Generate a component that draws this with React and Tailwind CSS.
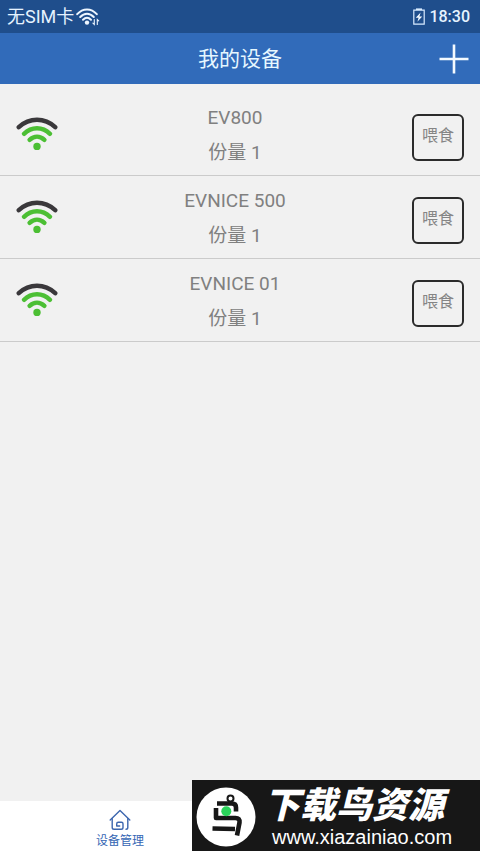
import React from "react";

const devices = [
  { name: "EV800", portion: 1 },
  { name: "EVNICE 500", portion: 1 },
  { name: "EVNICE 01", portion: 1 },
];

function StatusWifi() {
  return (
    <svg width="24" height="18" viewBox="0 0 24 18" fill="none" stroke="#eef6ff" strokeWidth="2" strokeLinecap="round" aria-hidden="true">
      <path d="M1.2 6.2C6.8-.2 15.2-.2 20.8 6.2" />
      <path d="M4.2 9C8.4 4.6 13.6 4.6 17.8 9" />
      <path d="M7 11.7c2.6-2.5 5.4-2.5 8 0" />
      <circle cx="11" cy="14.6" r="2.2" fill="#eef6ff" stroke="none" />
      <path d="M18.3 11.5v5l-1.4-1.4M21.3 16.5v-5l1.4 1.4" strokeWidth="1.1" />
    </svg>
  );
}

function Battery() {
  return (
    <svg width="12" height="18" viewBox="0 0 12 18" fill="none" aria-hidden="true">
      <path d="M.8 2.2h10.4v14H.8z" stroke="#d9ecff" strokeWidth="1.2" />
      <path d="M3 .4h6v1.6H3z" fill="#d9ecff" />
      <path d="M7.6 4.6 2.8 9.8h2.8l-1.2 4 4.8-5.4H6.4z" fill="#f4faff" />
    </svg>
  );
}

function DeviceWifi() {
  return (
    <svg className="block" width="42" height="34" viewBox="0 0 42 34" fill="none" strokeWidth="4.5" strokeLinecap="round" aria-hidden="true">
      <path d="M2.8 10.2C13.5.4 28.5.4 39.2 10.2" stroke="#3a383b" />
      <path d="M8 16.8c7.6-7.4 18.4-7.4 26 0" stroke="#4cbf34" />
      <path d="M13.6 22.8c4.6-4.2 10.2-4.2 14.8 0" stroke="#4cbf34" />
      <circle cx="21" cy="29.4" r="3.7" fill="#4cbf34" />
    </svg>
  );
}

function HomeIcon() {
  return (
    <svg width="22" height="22" viewBox="0 0 22 22" fill="none" stroke="#3c66ae" strokeWidth="1.4" strokeLinecap="round" strokeLinejoin="round" aria-hidden="true">
      <path d="M1.2 11 11 1.6l9.8 9.4" />
      <path d="M3.2 9.6v8.9q0 1.8 1.8 1.8h7.2q1.8 0 1.8-1.8v-3.7q0-1.5-1.5-1.5H9.3q-1.6 0-1.6 1.6v2.1h3" />
      <path d="M18.8 9.6v8.9q0 1.8-1.8 1.8" />
    </svg>
  );
}

function BirdLogo() {
  return (
    <svg className="mt-[7px]" width="60" height="60" viewBox="0 0 60 60" fill="none" aria-hidden="true">
      <circle cx="30" cy="30" r="29.5" fill="#fff" />
      <circle cx="34.5" cy="11.5" r="3" stroke="#171717" strokeWidth="2" />
      <g stroke="#171717" strokeWidth="4.6" strokeLinejoin="round">
        <path d="M21 16.5h15q4 0 4 4v4" />
        <path d="M20 21v10h19.5q4.5 0 4 4.500l-2.500 13" />
        <path d="M16.5 41.500l22.5.5" />
      </g>
      <circle cx="30.3" cy="24.3" r="5" fill="#2bd45b" />
    </svg>
  );
}

function DeviceRow({ name, portion }) {
  return (
    <li className="flex h-[83px] items-center border-b border-[#cbcbcb] px-4">
      <div className="w-[42px]">
        <DeviceWifi />
      </div>
      <div className="flex-1 pt-[2px] text-center text-[19px] leading-[35px] text-[#808080]">
        <p>{name}</p>
        <p>份量 {portion}</p>
      </div>
      <button
        type="button"
        className="mt-[7px] h-[47px] w-[52px] rounded-md border-2 border-[#2b2b2b] pb-1 text-base text-[#858585]"
      >
        喂食
      </button>
    </li>
  );
}

export default function App() {
  return (
    <div className="relative flex min-h-screen flex-col bg-[#f1f1f1] font-[Roboto,'Noto_Sans_CJK_SC',sans-serif]">
      <div className="flex h-[33px] items-center justify-between bg-[#1f4e8c] pl-[7px] pr-[10px] text-[#e6f3ff]">
        <div className="flex items-center gap-0.5 text-[18px]">
          <span>无SIM卡</span>
          <StatusWifi />
        </div>
        <div className="flex items-center gap-1 text-base font-medium">
          <Battery />
          <span>18:30</span>
        </div>
      </div>

      <header className="grid h-[51px] grid-cols-[1fr_auto_1fr] items-center bg-[#316bba] px-[10px]">
        <h1 className="col-start-2 pt-[2px] text-[21px] text-[#e6f7ff]">我的设备</h1>
        <button type="button" aria-label="添加设备" className="justify-self-end text-[#f4faff]">
          <svg className="block" width="32" height="32" viewBox="0 0 32 32" stroke="currentColor" strokeWidth="2.6" aria-hidden="true">
            <path d="M16 1.5v29M1.5 16h29" />
          </svg>
        </button>
      </header>

      <main className="flex-1 pt-[9px]">
        <ul>
          {devices.map((d) => (
            <DeviceRow key={d.name} {...d} />
          ))}
        </ul>
      </main>

      <nav className="grid h-[52px] grid-cols-2 bg-white">
        <a href="#devices" className="flex flex-col items-center pt-2 text-[12px] leading-[20px] text-[#3566b4]">
          <HomeIcon />
          <span>设备管理</span>
        </a>
      </nav>

      <div className="absolute bottom-[2px] right-0 flex h-[71px] w-[288px] items-start bg-[#171717] pl-1 text-white">
        <BirdLogo />
        <div className="flex-1 whitespace-nowrap pt-1">
          <p className="pl-2 font-['Noto_Sans_CJK_SC',sans-serif] text-[36px] font-black italic leading-[36px]">下载鸟资源</p>
          <p className="pl-4 pt-[5px] font-['Liberation_Sans',sans-serif] text-[20px] leading-[24px]">www.xiazainiao.com</p>
        </div>
      </div>
    </div>
  );
}
